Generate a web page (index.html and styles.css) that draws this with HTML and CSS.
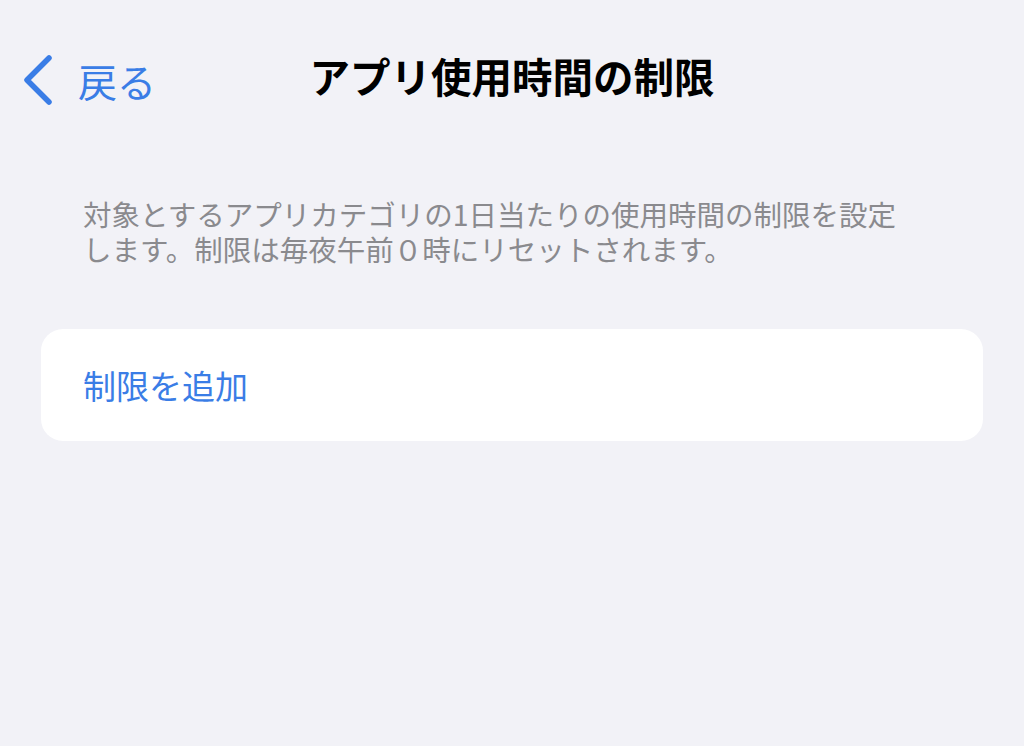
FILE: index.html
```html
<!DOCTYPE html>
<html lang="ja">
<head>
<meta charset="utf-8">
<link rel="stylesheet" href="styles.css">
</head>
<body>
<header class="nav">
  <div class="back">
    <svg class="chev" width="34" height="52" viewBox="0 0 34 52"><path d="M29 4 L7 26 L29 48" fill="none" stroke="#3a7de6" stroke-width="5.5" stroke-linecap="round" stroke-linejoin="round"/></svg>
    <span class="back-label">戻る</span>
  </div>
  <h1 class="title">アプリ使用時間の制限</h1>
  <div></div>
</header>
<p class="desc">対象とするアプリカテゴリの1日当たりの使用時間の制限を設定<br>します。制限は毎夜午前０時にリセットされます。</p>
<div class="card">
  <span class="add">制限を追加</span>
</div>
</body>
</html>
```
FILE: styles.css
```css
html, body {
  margin: 0;
  padding: 0;
  background: #f2f2f7;
  font-family: "Noto Sans CJK JP", "Noto Sans", sans-serif;
}
.nav {
  display: grid;
  grid-template-columns: 1fr auto 1fr;
  align-items: center;
  height: 80px;
  margin-top: 40px;
}
.back {
  display: flex;
  align-items: center;
  padding-left: 20px;
  gap: 24px;
}
.chev { display: block; }
.back-label {
  color: #3a7de6;
  font-size: 39px;
  line-height: 1;
}
.title {
  margin: 0;
  padding-bottom: 8px;
  font-size: 40.5px;
  font-weight: 700;
  color: #000;
  line-height: 1;
}
.desc {
  margin: 76px 0 0 83px;
  font-size: 28.5px;
  line-height: 35px;
  color: #8a8a8e;
}
.card {
  margin: 63px 41px 0 41px;
  height: 112px;
  background: #fff;
  border-radius: 22px;
  display: flex;
  align-items: center;
  padding-left: 42px;
}
.add {
  color: #3a7de6;
  font-size: 33px;
  line-height: 1;
}
```
